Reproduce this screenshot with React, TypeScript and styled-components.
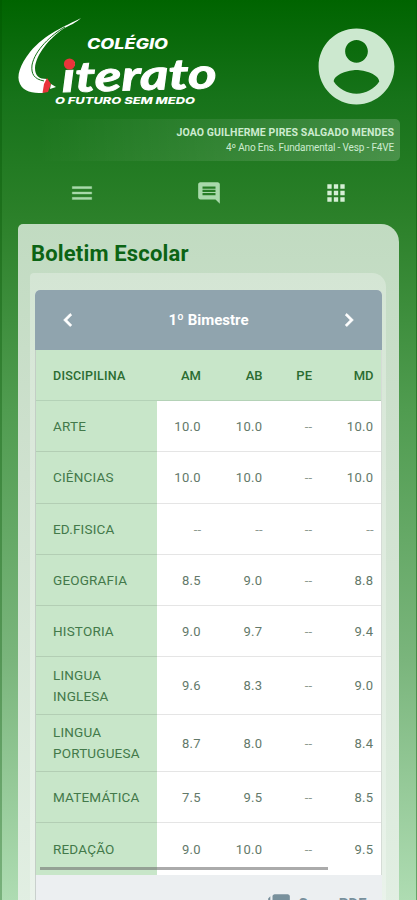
import React from "react";
import styled, { createGlobalStyle } from "styled-components";

const GlobalStyle = createGlobalStyle`
  * { box-sizing: border-box; }
  body { margin: 0; overflow: hidden; font-family: Roboto, "Liberation Sans", sans-serif; }
`;

const Screen = styled.div`
  height: 900px;
  overflow: hidden;
  padding: 0 18px;
  background: linear-gradient(#006400 0, #17731a 100px, #2b8029 215px, #509c50 410px, #7ab57c 660px, #aedcb2 900px);
  box-shadow: inset 2px 0 0 rgba(0, 80, 0, 0.3), inset -1px 0 0 rgba(0, 80, 0, 0.4);
`;

const Header = styled.header`
  display: flex;
  justify-content: space-between;
  height: 119px;
`;

const Logo = styled.svg`
  display: block;
  width: 204px;
  height: 112px;
  overflow: visible;
`;

const Avatar = styled.svg`
  width: 91px;
  height: 91px;
  margin: 21px -3px 0 0;
  fill: #cce8cf;
`;

const Student = styled.div`
  height: 42px;
  margin-right: -1px;
  padding: 6px 6px 0 0;
  border-radius: 5px;
  text-align: right;
  color: #cdebcf;
  background: linear-gradient(90deg, rgba(255, 255, 255, 0) 5%, rgba(255, 255, 255, 0.18) 100%);
`;

const StudentName = styled.div`
  font-size: 10.5px;
  line-height: 15px;
  font-weight: 700;
  letter-spacing: 0.12px;
`;

const StudentClass = styled.div`
  font-size: 10px;
  line-height: 15px;
  letter-spacing: -0.15px;
`;

const Nav = styled.nav`
  display: grid;
  grid-template-columns: repeat(3, 127px);
  justify-items: center;
  align-items: center;
  height: 63px;
`;

const NavIcon = styled.svg<{ $tint?: string }>`
  width: 26px;
  height: 26px;
  fill: ${(p) => p.$tint ?? "#a9d9ab"};
`;

const Panel = styled.main`
  height: 720px;
  padding: 16px 13px 0 12px;
  border-radius: 5px 18px 0 0;
  background: linear-gradient(#c1dbc1, #cfe1cf 250px, #e2efe3 690px);
`;

const Title = styled.h1`
  margin: 0;
  height: 33px;
  padding-left: 1px;
  font-size: 22px;
  line-height: 27px;
  font-weight: 700;
  color: #0c6414;
  letter-spacing: 0.17px;
`;

const Inset = styled.div`
  height: 640px;
  padding: 17px 4px 0 5px;
  border-radius: 4px 14px 0 0;
  background: rgba(255, 255, 255, 0.28);
`;

const Card = styled.section`
  overflow: hidden;
  border-radius: 5px 5px 0 0;
  background: #fff;
`;

const Period = styled.div`
  display: flex;
  align-items: center;
  justify-content: space-between;
  height: 60px;
  padding: 0 20px;
  color: #fff;
  font-size: 15px;
  font-weight: 700;
  background: #90a4ae;
  > span { margin-top: -1px; }
`;

const Chevron = styled.svg`
  width: 26px;
  height: 26px;
  fill: #fff;
`;

const Table = styled.div`
  position: relative;
  height: 525px;
  border-left: 1px solid #c3cec5;
  border-right: 1px solid #d5dcd6;
`;

const Row = styled.div<{ $h: number; $head?: boolean; $last?: boolean }>`
  display: grid;
  grid-template-columns: 121px 44px 61.5px 49.5px 61.5px;
  height: ${(p) => p.$h}px;
  border-bottom: ${(p) => (p.$last ? 0 : 1)}px solid ${(p) => (p.$head ? "#b4d2b7" : "rgba(0,0,0,0.1)")};
  background: ${(p) => (p.$head ? "#c8e6c9" : "linear-gradient(90deg, #c8e6c9 121px, #fff 121px)")};
  font-size: 13px;
  font-weight: ${(p) => (p.$head ? 500 : 400)};
  color: ${(p) => (p.$head ? "#2b6c31" : "#63796a")};
`;

const Subject = styled.div<{ $head?: boolean }>`
  display: flex;
  align-items: center;
  padding-left: 17px;
  line-height: 21px;
  font-size: ${(p) => (p.$head ? 12.5 : 13.5)}px;
  letter-spacing: ${(p) => (p.$head ? 0.22 : 0.18)}px;
  color: ${(p) => (p.$head ? "#2b6c31" : "#43794a")};
  white-space: pre-line;
`;

const Grade = styled.div<{ $head?: boolean; $empty?: boolean }>`
  display: flex;
  align-items: center;
  justify-content: flex-end;
  letter-spacing: ${(p) => (p.$head || p.$empty ? 0 : 0.35)}px;
  color: ${(p) => (p.$empty ? "#8d9a91" : "inherit")};
`;

const ScrollThumb = styled.div`
  position: absolute;
  left: 4px;
  bottom: 5px;
  width: 288px;
  height: 3px;
  background: rgba(110, 110, 110, 0.58);
`;

const Footer = styled.footer`
  display: flex;
  align-items: flex-start;
  gap: 6px;
  height: 60px;
  padding: 17px 0 0 230px;
  border-left: 1px solid #c9d0cd;
  color: #78909c;
  background: #eceff1;
  font-size: 15px;
  font-weight: 700;
  line-height: 24px;
`;

const PdfIcon = styled.svg`
  width: 26px;
  height: 26px;
  fill: #78909c;
`;

const rows: { name: string; h: number; grades: string[] }[] = [
  { name: "ARTE", h: 51, grades: ["10.0", "10.0", "--", "10.0"] },
  { name: "CIÊNCIAS", h: 52, grades: ["10.0", "10.0", "--", "10.0"] },
  { name: "ED.FISICA", h: 51, grades: ["--", "--", "--", "--"] },
  { name: "GEOGRAFIA", h: 51, grades: ["8.5", "9.0", "--", "8.8"] },
  { name: "HISTORIA", h: 51, grades: ["9.0", "9.7", "--", "9.4"] },
  { name: "LINGUA\nINGLESA", h: 58, grades: ["9.6", "8.3", "--", "9.0"] },
  { name: "LINGUA\nPORTUGUESA", h: 57, grades: ["8.7", "8.0", "--", "8.4"] },
  { name: "MATEMÁTICA", h: 51, grades: ["7.5", "9.5", "--", "8.5"] },
  { name: "REDAÇÃO", h: 52, grades: ["9.0", "10.0", "--", "9.5"] },
];

export default function App() {
  return (
    <>
      <GlobalStyle />
      <Screen>
        <Header>
          <Logo viewBox="18 0 204 112" fill="#fff">
            <path d="M81 18C64 27 46 33 30 52C20 65 16 76 20 84C24 92 32 93 43 93L47 79C39 79 35 76 35 68C36 54 50 38 63 29C70 25 76 23 81 18Z" />
            <path d="M65 27C51 35 35 50 32 65C31 74 34 79 44 81" fill="none" stroke="#147117" strokeWidth="1" />
            <path d="M47 78L51 84L48 92L42.500 93L44 84Z" fill="#e9343a" />
            <path d="M51 84L56 87L50 89Z" />
            <g transform="rotate(-1.5 140 88)" stroke="#fff" strokeWidth="0.9">
              <text x="62" y="90" fontSize="42" fontFamily="Lato" fontWeight="700" fontStyle="italic" textLength="155" lengthAdjust="spacingAndGlyphs">iterato</text>
            </g>
            <text x="87" y="49" fontSize="14" fontFamily="Inter" fontWeight="800" fontStyle="italic" textLength="81" lengthAdjust="spacingAndGlyphs">COLÉGIO</text>
            <circle cx="69.500" cy="64" r="5.6" fill="#e9343a" />
            <text x="55" y="104" fontSize="9.6" fontFamily="Inter" fontWeight="800" fontStyle="italic" textLength="140" lengthAdjust="spacingAndGlyphs">O FUTURO SEM MEDO</text>
          </Logo>
          <Avatar viewBox="0 0 24 24">
            <path d="M12 2C6.48 2 2 6.48 2 12s4.48 10 10 10 10-4.48 10-10S17.52 2 12 2zm0 3c1.66 0 3 1.34 3 3s-1.34 3-3 3-3-1.34-3-3 1.34-3 3-3zm0 14.2c-2.5 0-4.71-1.28-6-3.22.03-1.99 4-3.08 6-3.08 1.99 0 5.97 1.09 6 3.08-1.29 1.94-3.5 3.22-6 3.22z" />
          </Avatar>
        </Header>
        <Student>
          <StudentName>JOAO GUILHERME PIRES SALGADO MENDES</StudentName>
          <StudentClass>4º Ano Ens. Fundamental - Vesp - F4VE</StudentClass>
        </Student>
        <Nav>
          <NavIcon viewBox="0 0 24 24"><path d="M3 18h18v-2H3v2zm0-5h18v-2H3v2zm0-7v2h18V6H3z" stroke="#a9d9ab" strokeWidth=".3" /></NavIcon>
          <NavIcon viewBox="0 0 24 24"><path d="M21.99 4c0-1.1-.89-2-1.99-2H4c-1.1 0-2 .9-2 2v12c0 1.1.9 2 2 2h14l4 4-.01-18zM18 14H6v-2h12v2zm0-3H6V9h12v2zm0-3H6V6h12v2z" /></NavIcon>
          <NavIcon viewBox="0 0 24 24" $tint="#d5efd5"><path d="M4 8h4V4H4v4zm6 12h4v-4h-4v4zm-6 0h4v-4H4v4zm0-6h4v-4H4v4zm6 0h4v-4h-4v4zm6-10v4h4V4h-4zm-6 4h4V4h-4v4zm6 6h4v-4h-4v4zm0 6h4v-4h-4v4z" /></NavIcon>
        </Nav>
        <Panel>
          <Title>Boletim Escolar</Title>
          <Inset>
            <Card>
              <Period>
                <Chevron viewBox="0 0 24 24"><path d="M15.41 7.41 14 6l-6 6 6 6 1.41-1.41L10.83 12z" stroke="#fff" strokeWidth=".7" /></Chevron>
                <span>1º Bimestre</span>
                <Chevron viewBox="0 0 24 24"><path d="M10 6 8.59 7.41 13.17 12l-4.58 4.59L10 18l6-6z" stroke="#fff" strokeWidth=".7" /></Chevron>
              </Period>
              <Table>
                <Row $h={51} $head>
                  <Subject $head>DISCIPILINA</Subject>
                  {["AM", "AB", "PE", "MD"].map((g) => <Grade $head key={g}>{g}</Grade>)}
                </Row>
                {rows.map((r, n) => (
                  <Row $h={r.h} $last={n === rows.length - 1} key={r.name}>
                    <Subject>{r.name}</Subject>
                    {r.grades.map((g, i) => <Grade $empty={g === "--"} key={i}>{g}</Grade>)}
                  </Row>
                ))}
                <ScrollThumb />
              </Table>
              <Footer>
                <PdfIcon viewBox="0 0 24 24"><path d="M20 2H8c-1.1 0-2 .9-2 2v12c0 1.1.9 2 2 2h12c1.1 0 2-.9 2-2V4c0-1.1-.9-2-2-2zM4 6V4L2 6v14c0 1.1.9 2 2 2h14v-2H4V6z" /></PdfIcon>
                <span>Gerar PDF</span>
              </Footer>
            </Card>
          </Inset>
        </Panel>
      </Screen>
    </>
  );
}
